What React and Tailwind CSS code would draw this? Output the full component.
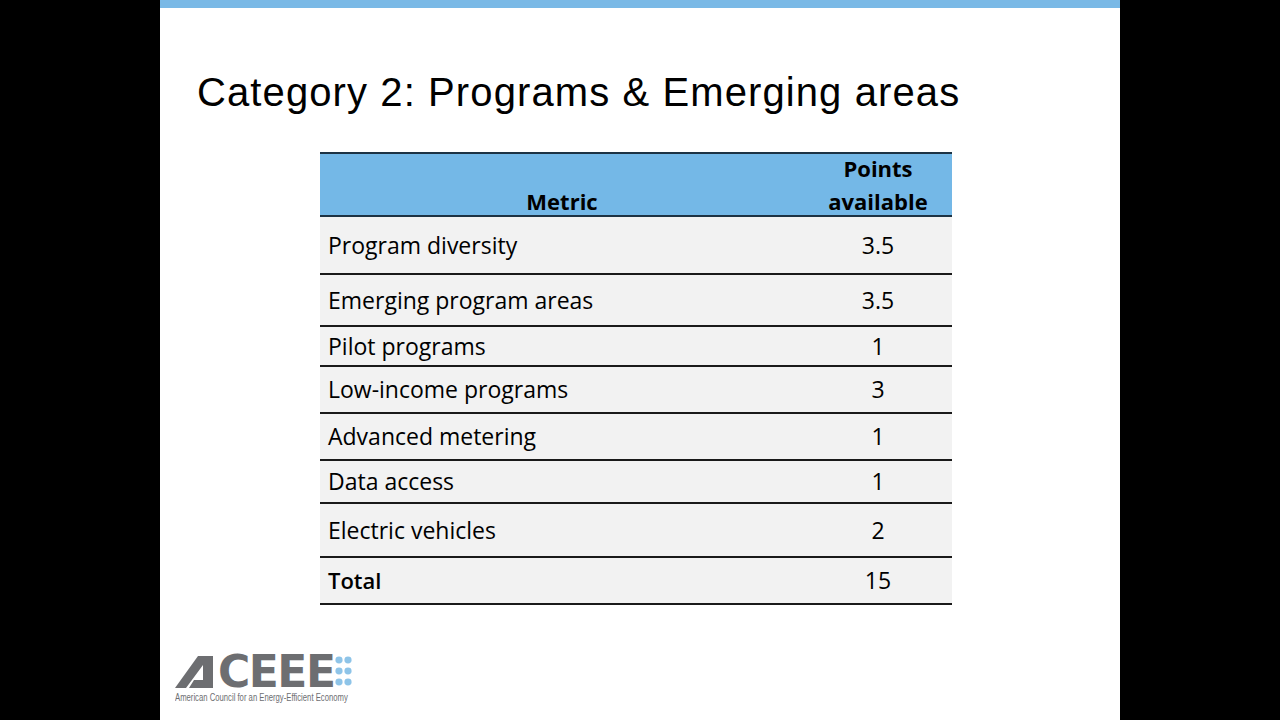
import React from 'react';

const rows = [
  { metric: 'Program diversity', points: '3.5', h: 'h-[58px]' },
  { metric: 'Emerging program areas', points: '3.5', h: 'h-[52px]' },
  { metric: 'Pilot programs', points: '1', h: 'h-[40px]' },
  { metric: 'Low-income programs', points: '3', h: 'h-[47px]' },
  { metric: 'Advanced metering', points: '1', h: 'h-[47px]' },
  { metric: 'Data access', points: '1', h: 'h-[43px]' },
  { metric: 'Electric vehicles', points: '2', h: 'h-[54px]' },
];

const AceeeLogo = () => (
  <div className="flex flex-col">
    <div className="flex items-end h-[32px]">
      {/* stylised "A" mark */}
      <svg width="38" height="32" viewBox="0 0 38 32" className="shrink-0">
        <path
          d="M0 32 L23 0 L38 0 L38 32 Z M11 32 L14 32 L19 24 L28 24 L28 9 Z"
          fill="#6d6e71"
          fillRule="evenodd"
        />
      </svg>
      <span className="ml-[5px] text-[44px] leading-[32px] font-bold text-[#6d6e71] tracking-[-1.5px] [font-family:'DejaVu_Sans',sans-serif]">
        CEEE
      </span>
      <svg width="18" height="31" viewBox="0 0 18 31" className="shrink-0 ml-[1px] mb-[1px]">
        {[4, 15, 26].map((cy) =>
          [4, 13].map((cx) => (
            <ellipse key={`${cx}-${cy}`} cx={cx} cy={cy} rx="3.6" ry="3.4" fill="#8ec4e8" />
          ))
        )}
      </svg>
    </div>
    <div className="mt-[4px] h-[11px] w-[176px]">
      <div className="origin-left scale-x-[0.77] text-[10px] leading-[11px] text-[#6d6e71] whitespace-nowrap [font-family:'Liberation_Sans',Arial,sans-serif]">
        American Council for an Energy-Efficient Economy
      </div>
    </div>
  </div>
);

export default function App() {
  return (
    <div className="w-[1280px] h-[720px] bg-black flex justify-center overflow-hidden">
      <div className="w-[960px] h-[720px] bg-white flex flex-col">
        <div className="h-[8px] bg-[#7ab9e6]" />

        <h1 className="mt-[60px] ml-[37px] text-[40px] leading-[48px] tracking-[1.1px] text-black [font-family:'Liberation_Sans',Arial,sans-serif]">
          Category 2: Programs &amp; Emerging areas
        </h1>

        <div className="mt-[36px] ml-[160px] w-[632px] [font-family:'Open_Sans','Noto_Sans',sans-serif] text-[23px] text-black">
          <div className="flex h-[65px] bg-[#74b8e7] border-t-2 border-b-2 border-[#1d3344] font-bold text-[22px]">
            <div className="w-[484px] flex items-end justify-center leading-[33px] translate-y-[3px]">Metric</div>
            <div className="w-[148px] flex flex-col items-center justify-end leading-[33px] translate-y-[3px]">
              <span>Points</span>
              <span>available</span>
            </div>
          </div>
          {rows.map((r) => (
            <div key={r.metric} className={`flex ${r.h} bg-[#f2f2f2] border-b-2 border-[#1a1a1a]`}>
              <div className="w-[484px] flex items-center pl-[8px]">{r.metric}</div>
              <div className="w-[148px] flex items-center justify-center">{r.points}</div>
            </div>
          ))}
          <div className="flex h-[47px] bg-[#f2f2f2] border-b-2 border-[#1a1a1a]">
            <div className="w-[484px] flex items-center pl-[8px] font-semibold text-[22px]">Total</div>
            <div className="w-[148px] flex items-center justify-center">15</div>
          </div>
        </div>

        <div className="mt-auto mb-[17px] ml-[15px]">
          <AceeeLogo />
        </div>
      </div>
    </div>
  );
}
